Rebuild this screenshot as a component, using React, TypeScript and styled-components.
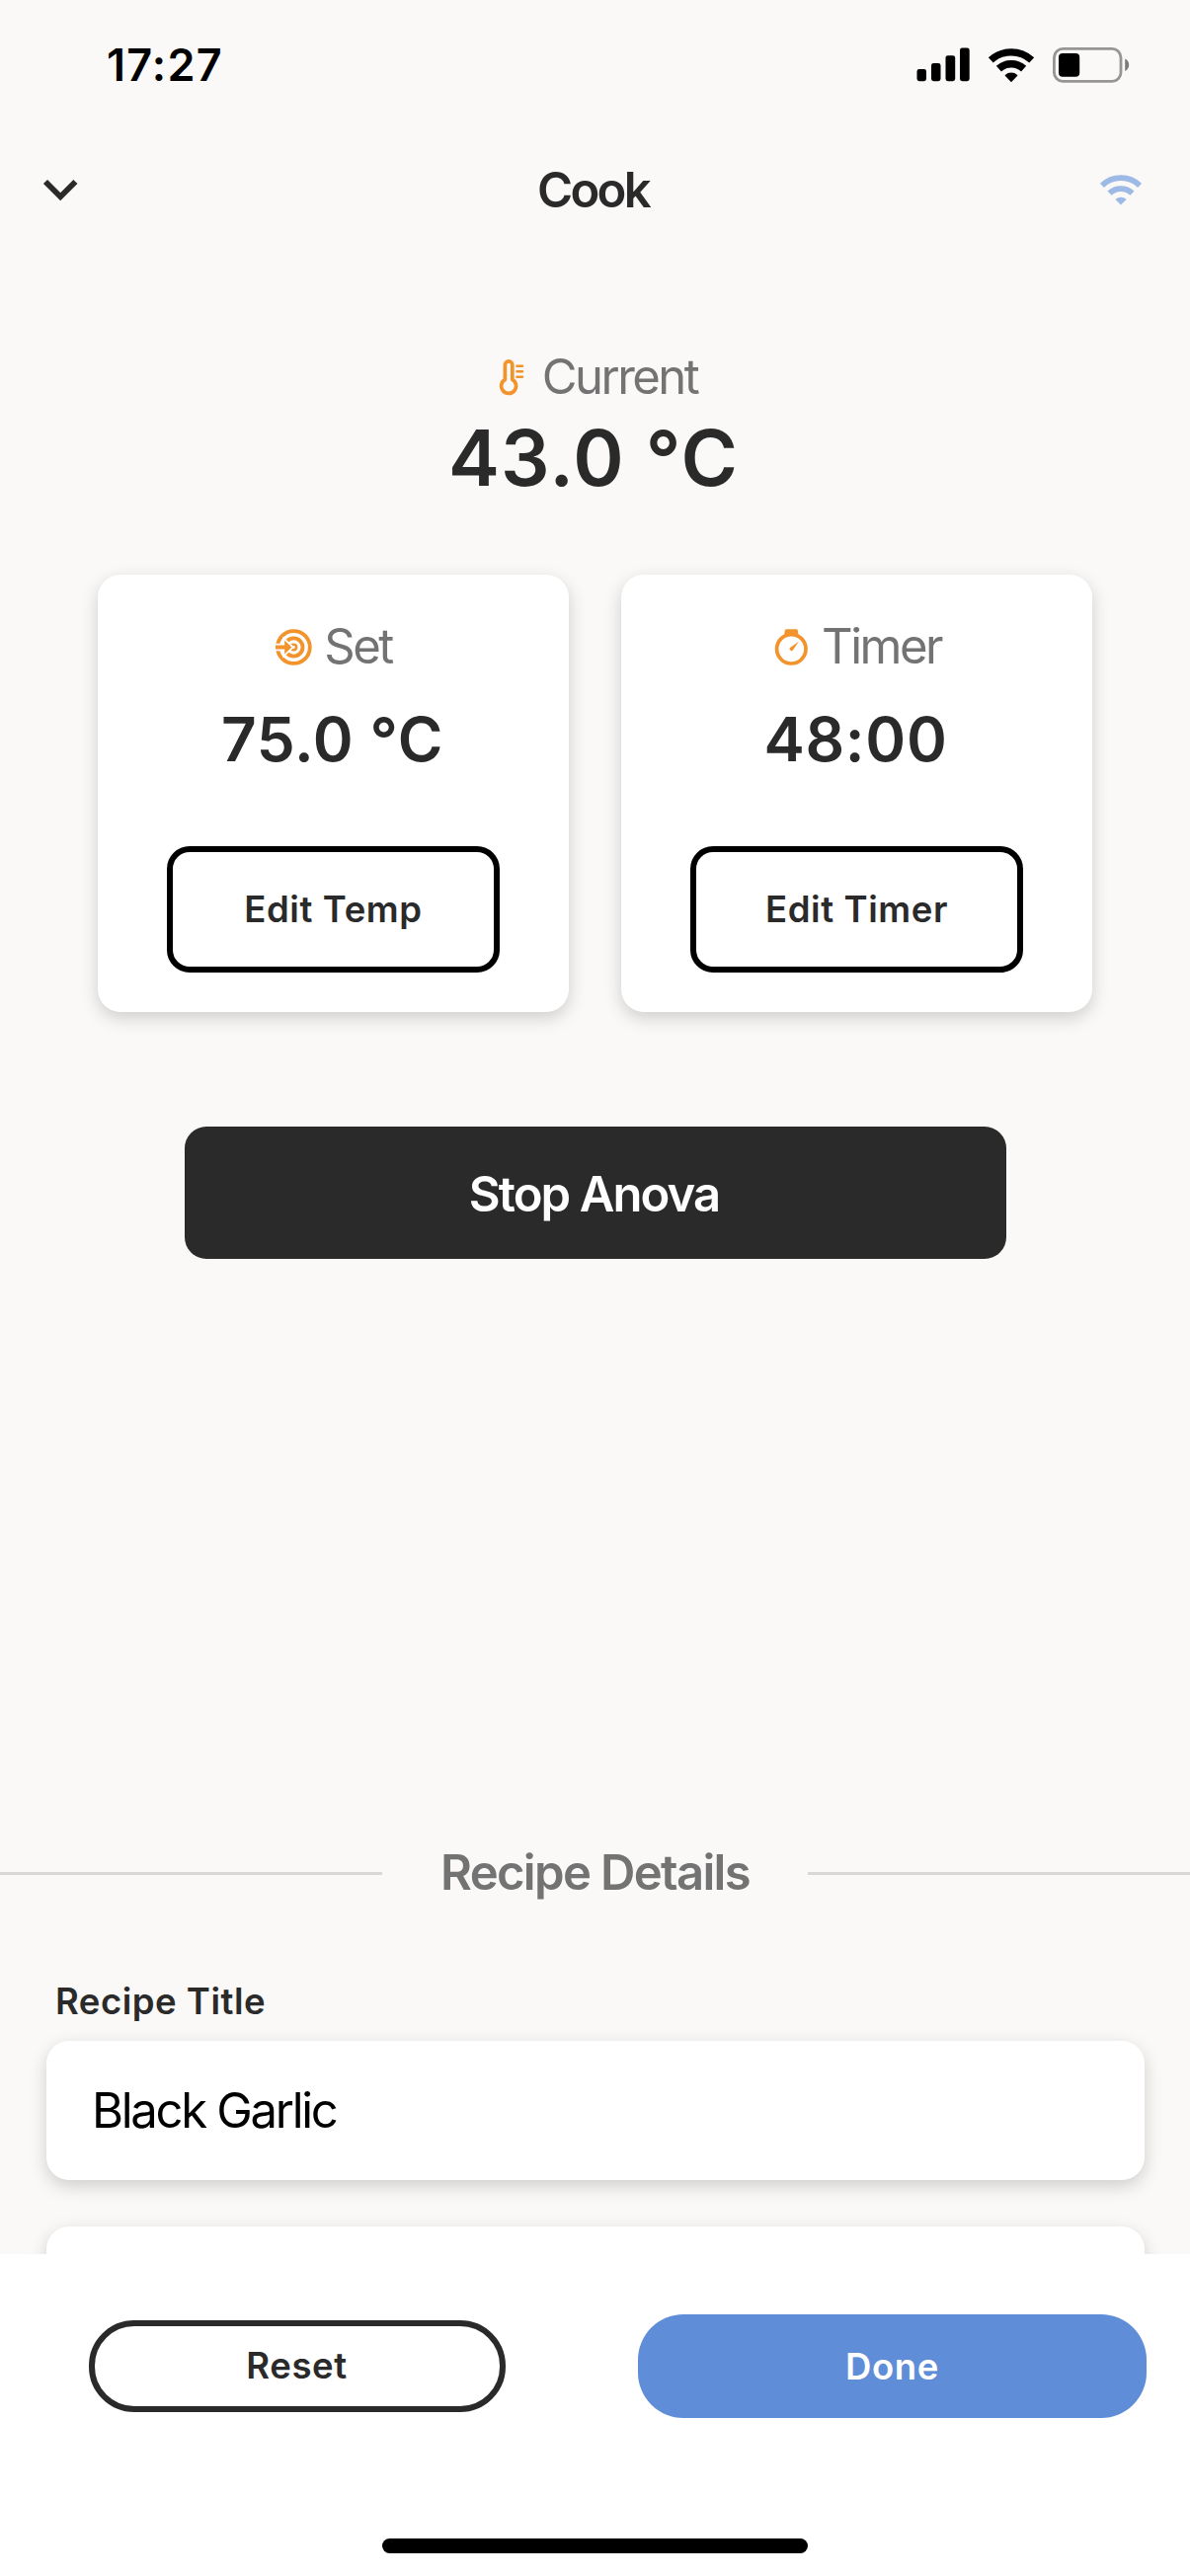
import React from "react";
import styled, { createGlobalStyle } from "styled-components";

const ink = "#2a2a2a";
const muted = "#737373";
const orange = "#f2932c";
const blue = "#5f8dd8";
const canvas = "#faf9f7";
const lift = "0 6px 18px rgba(0, 0, 0, 0.175)";

const GlobalStyle = createGlobalStyle`
  * { box-sizing: border-box; }
  body {
    margin: 0;
    background: ${canvas};
    font-family: Inter, "Liberation Sans", sans-serif;
    color: ${ink};
  }
  button, input { font-family: inherit; margin: 0; }
  svg { display: block; flex: none; }
`;

const Screen = styled.div`
  width: 1205px;
  height: 2609px;
  display: flex;
  flex-direction: column;
  overflow: hidden;
  background: ${canvas};
`;

const StatusBar = styled.div`
  flex: none;
  height: 131px;
  display: flex;
  align-items: center;
  justify-content: space-between;
  padding: 0 61px 0 108px;
`;

const Clock = styled.time`
  font-size: 45px;
  font-weight: 570;
  letter-spacing: 1.2px;
  color: #000;
`;

const StatusIcons = styled.div`
  display: flex;
  align-items: center;
  gap: 18px;
`;

const Header = styled.header`
  flex: none;
  height: 123px;
  display: grid;
  grid-template-columns: 1fr auto 1fr;
  align-items: center;
  padding: 0 47px 0 43px;
`;

const PageTitle = styled.h1`
  margin: 0;
  font-size: 49px;
  line-height: 60px;
  font-weight: 560;
  letter-spacing: -2.7px;
`;

const HeaderEnd = styled.div`
  display: flex;
  justify-content: flex-end;
`;

const Content = styled.main`
  flex: 1;
  min-height: 0;
  display: flex;
  flex-direction: column;
  overflow: hidden;
  padding-top: 98px;
`;

const Reading = styled.section`
  flex: none;
  display: flex;
  flex-direction: column;
  align-items: center;
`;

const Label = styled.div`
  display: flex;
  align-items: center;
  gap: 12px;
  height: 60px;
  padding-left: 1px;
  font-size: 49px;
  line-height: 60px;
  font-weight: 380;
  letter-spacing: -2.5px;
  color: ${muted};
`;

const CurrentValue = styled.div`
  padding-right: 3px;
  font-size: 78px;
  line-height: 103px;
  font-weight: 580;
  letter-spacing: 1.2px;
`;

const Cards = styled.section`
  flex: none;
  display: grid;
  grid-template-columns: 477px 477px;
  justify-content: center;
  gap: 53px;
  margin-top: 67px;
`;

const Card = styled.article`
  height: 443px;
  display: flex;
  flex-direction: column;
  align-items: center;
  padding: 43px 0 40px;
  border-radius: 23px;
  background: #fff;
  box-shadow: ${lift};
`;

const CardValue = styled.div`
  margin-top: 23px;
  padding-right: 2px;
  font-size: 62px;
  line-height: 82px;
  font-weight: 570;
  letter-spacing: 0.7px;
`;

const EditButton = styled.button`
  width: 337px;
  height: 128px;
  margin-top: auto;
  padding: 0 0 1px;
  border: 6px solid #000;
  border-radius: 23px;
  background: #fff;
  color: ${ink};
  font-size: 36.5px;
  font-weight: 560;
  letter-spacing: 0.6px;
`;

const StopButton = styled.button`
  flex: none;
  align-self: center;
  width: 832px;
  height: 134px;
  margin-top: 116px;
  padding: 3px 2px 0 0;
  border: 0;
  border-radius: 22px;
  background: ${ink};
  color: #fff;
  font-size: 49px;
  font-weight: 560;
  letter-spacing: -1.9px;
`;

const SectionHeading = styled.h2`
  flex: none;
  display: flex;
  align-items: center;
  justify-content: space-between;
  height: 60px;
  margin: 592px 0 0;
  font-size: 49px;
  line-height: 60px;
  font-weight: 560;
  letter-spacing: -1.65px;
  color: ${muted};

  &::before,
  &::after {
    content: "";
    width: 387px;
    height: 3px;
    background: #d9d8d7;
  }
`;

const Fields = styled.form`
  flex: none;
  display: flex;
  flex-direction: column;
  padding: 78px 46px 0 47px;
`;

const FieldLabel = styled.label`
  padding-left: 9px;
  font-size: 36.5px;
  line-height: 44px;
  font-weight: 560;
  letter-spacing: 0.5px;
`;

const TextField = styled.input`
  width: 100%;
  height: 141px;
  margin-top: 18px;
  padding: 0 46px;
  border: 0;
  border-radius: 23px;
  background: #fff;
  box-shadow: ${lift};
  color: #000;
  font-size: 49px;
  font-weight: 380;
  letter-spacing: -2.3px;
`;

const NextField = styled.div`
  height: 141px;
  margin-top: 47px;
  border-radius: 23px;
  background: #fff;
  box-shadow: ${lift};
`;

const Footer = styled.footer`
  flex: none;
  height: 326px;
  display: flex;
  flex-direction: column;
  align-items: center;
  justify-content: space-between;
  padding: 61px 0 23px;
  background: #fff;
`;

const Actions = styled.div`
  width: 100%;
  display: flex;
  align-items: center;
  justify-content: space-between;
  padding: 0 44px 0 90px;
`;

const ActionButton = styled.button<{ $filled?: boolean }>`
  width: ${(p) => (p.$filled ? 515 : 422)}px;
  height: ${(p) => (p.$filled ? 105 : 93)}px;
  padding: ${(p) => (p.$filled ? "0" : "0 1px 1px 0")};
  border: ${(p) => (p.$filled ? "0" : `6px solid ${ink}`)};
  border-radius: 46px;
  background: ${(p) => (p.$filled ? blue : "#fff")};
  color: ${(p) => (p.$filled ? "#fff" : ink)};
  font-size: 36.5px;
  font-weight: 560;
  letter-spacing: 0.6px;
`;

const HomeIndicator = styled.div`
  width: 431px;
  height: 15px;
  border-radius: 8px;
  background: #000;
`;

function SignalIcon() {
  return (
    <svg width="54" height="35" viewBox="0 0 54 35">
      <rect x="0.5" y="22" width="9.5" height="12.2" rx="2.4" />
      <rect x="15" y="16" width="9.5" height="18.2" rx="2.4" />
      <rect x="29.5" y="8.2" width="9.7" height="26" rx="2.4" />
      <rect x="44" y="0.5" width="9.7" height="33.7" rx="2.4" />
    </svg>
  );
}

function StatusWifiIcon() {
  return (
    <svg width="48" height="36" viewBox="0 0 48 36">
      <g fill="none" stroke="#000">
        <path d="M3.3 12.9A30.6 30.6 0 0 1 44.7 12.9" strokeWidth="7.3" />
        <path d="M11.4 21.6A18.6 18.6 0 0 1 36.6 21.6" strokeWidth="7.6" />
      </g>
      <path
        d="M24 34.4L18.2 28.4A8.6 8.6 0 0 1 29.8 28.4Z"
        stroke="#000"
        strokeWidth="1.2"
        strokeLinejoin="round"
      />
    </svg>
  );
}

function BatteryIcon() {
  return (
    <svg width="78" height="36" viewBox="0 0 78 36">
      <rect x="1.4" y="1.4" width="67.6" height="33" rx="9" fill="none" stroke="#969593" strokeWidth="2.8" />
      <rect x="6" y="6" width="21.2" height="23.8" rx="4" />
      <path d="M73.2 11.5C75.6 12.6 77.2 15 77.2 17.8S75.6 23 73.2 24.1Z" fill="#7d7c7a" />
    </svg>
  );
}

function ConnectionIcon() {
  return (
    <svg width="45" height="32" viewBox="0 0 45 32">
      <g fill="none" stroke="#9db9e6" strokeWidth="5.8">
        <path d="M2.9 10.9A27.6 27.6 0 0 1 41.1 10.9" />
        <path d="M10.5 18.7A16.6 16.6 0 0 1 33.5 18.7" />
      </g>
      <path d="M22 30.6L16.4 25A8 8 0 0 1 27.6 25Z" fill="#9db9e6" />
    </svg>
  );
}

function ChevronIcon() {
  return (
    <svg width="37" height="25" viewBox="0 0 37 25" role="img" aria-label="Close">
      <path d="M3 4L18.2 19.2L33.4 4" fill="none" stroke={ink} strokeWidth="5.8" />
    </svg>
  );
}

function ThermometerIcon() {
  return (
    <svg width="37" height="37" viewBox="0 0 37 37" fill="none" stroke={orange}>
      <path
        d="M11.4 20.4V5.6A3.7 3.7 0 0 1 18.8 5.6V20.4A7.5 7.5 0 1 1 11.4 20.4Z"
        strokeWidth="3.7"
        strokeLinejoin="round"
      />
      <path d="M23.5 6.7H29M23.5 12.3H29M23.5 17.7H29" strokeWidth="2.6" strokeLinecap="round" />
    </svg>
  );
}

function TargetIcon() {
  return (
    <svg width="37" height="37" viewBox="0 0 37 37">
      <g fill="none" stroke={orange}>
        <circle cx="18.4" cy="18.5" r="16.4" strokeWidth="3.8" />
        <circle cx="18.4" cy="18.5" r="9.1" strokeWidth="3.9" />
        <circle cx="18.4" cy="18.5" r="2.7" strokeWidth="2.6" />
      </g>
      <path
        d="M0 16.6H9.2V11.6L16.4 18.5L9.2 25.4V20.4H0Z"
        fill={orange}
        stroke="#fff"
        strokeWidth="3.6"
        paintOrder="stroke"
      />
    </svg>
  );
}

function StopwatchIcon() {
  return (
    <svg width="37" height="37" viewBox="0 0 37 37">
      <circle cx="18.3" cy="20.3" r="14.7" fill="none" stroke={orange} strokeWidth="3.7" />
      <path
        d="M13.6 0.2H23A2 2 0 0 1 24.9 1.6L25.6 7.4Q18.3 4.4 11 7.4L11.7 1.6A2 2 0 0 1 13.6 0.2Z"
        fill={orange}
      />
      <path d="M25.9 12.7L20 21.2A1.9 1.9 0 1 1 17.2 18.7Z" fill={orange} />
    </svg>
  );
}

export default function App() {
  return (
    <>
      <GlobalStyle />
      <Screen>
        <StatusBar>
          <Clock>17:27</Clock>
          <StatusIcons>
            <SignalIcon />
            <StatusWifiIcon />
            <BatteryIcon />
          </StatusIcons>
        </StatusBar>
        <Header>
          <ChevronIcon />
          <PageTitle>Cook</PageTitle>
          <HeaderEnd>
            <ConnectionIcon />
          </HeaderEnd>
        </Header>
        <Content>
          <Reading>
            <Label>
              <ThermometerIcon />
              Current
            </Label>
            <CurrentValue>43.0 °C</CurrentValue>
          </Reading>
          <Cards>
            <Card>
              <Label>
                <TargetIcon />
                Set
              </Label>
              <CardValue>75.0 °C</CardValue>
              <EditButton>Edit Temp</EditButton>
            </Card>
            <Card>
              <Label>
                <StopwatchIcon />
                Timer
              </Label>
              <CardValue>48:00</CardValue>
              <EditButton>Edit Timer</EditButton>
            </Card>
          </Cards>
          <StopButton>Stop Anova</StopButton>
          <SectionHeading>Recipe Details</SectionHeading>
          <Fields>
            <FieldLabel htmlFor="recipe-title">Recipe Title</FieldLabel>
            <TextField id="recipe-title" defaultValue="Black Garlic" />
            <NextField />
          </Fields>
        </Content>
        <Footer>
          <Actions>
            <ActionButton>Reset</ActionButton>
            <ActionButton $filled>Done</ActionButton>
          </Actions>
          <HomeIndicator />
        </Footer>
      </Screen>
    </>
  );
}
